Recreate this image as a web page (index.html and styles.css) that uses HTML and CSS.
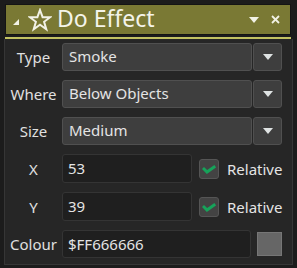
FILE: index.html
```html
<!DOCTYPE html>
<html lang="en">
<head>
  <meta charset="UTF-8" />
  <title>Do Effect</title>
  <link rel="stylesheet" href="styles.css">
</head>
<body>
  <div class="window">
    <div class="titlebar">
      <span class="corner"></span>
      <svg class="star" width="24" height="24" viewBox="0 0 24 24" fill="none" stroke="#f2f2e6" stroke-width="2" stroke-linejoin="miter">
        <polygon points="12,2 14.6,9.2 22.2,9.2 16.1,13.8 18.3,21.2 12,16.8 5.7,21.2 7.9,13.8 1.8,9.2 9.4,9.2"></polygon>
      </svg>
      <h1 class="title">Do Effect</h1>
      <span class="title-tools">
        <span class="tri"></span>
        <svg class="close" width="9" height="9" viewBox="0 0 9 9" stroke="#f2f2e6" stroke-width="1.8">
          <line x1="1" y1="1" x2="8" y2="8"></line>
          <line x1="8" y1="1" x2="1" y2="8"></line>
        </svg>
      </span>
    </div>
    <div class="accent"></div>
    <div class="body">
      <div class="row">
        <label class="label">Type</label>
        <div class="select">Smoke</div>
        <div class="drop"><span class="tri"></span></div>
      </div>
      <div class="row">
        <label class="label">Where</label>
        <div class="select">Below Objects</div>
        <div class="drop"><span class="tri"></span></div>
      </div>
      <div class="row">
        <label class="label">Size</label>
        <div class="select">Medium</div>
        <div class="drop"><span class="tri"></span></div>
      </div>
      <div class="row row-input">
        <label class="label">X</label>
        <div class="field field-short">53</div>
        <span class="check">
          <svg width="14" height="10" viewBox="0 0 14 10" fill="none" stroke="#16a35a" stroke-width="3" stroke-linecap="square">
            <polyline points="2,5 5,8 12,3"></polyline>
          </svg>
        </span>
        <span class="check-text">Relative</span>
      </div>
      <div class="row row-input">
        <label class="label">Y</label>
        <div class="field field-short">39</div>
        <span class="check">
          <svg width="14" height="10" viewBox="0 0 14 10" fill="none" stroke="#16a35a" stroke-width="3" stroke-linecap="square">
            <polyline points="2,5 5,8 12,3"></polyline>
          </svg>
        </span>
        <span class="check-text">Relative</span>
      </div>
      <div class="row row-colour">
        <label class="label">Colour</label>
        <div class="field field-colour">$FF666666</div>
        <span class="swatch"></span>
      </div>
    </div>
  </div>
</body>
</html>
```

FILE: styles.css
```css
* {
  margin: 0;
  padding: 0;
  box-sizing: border-box;
}

body {
  background: #1c1c1c;
  font-family: "Noto Sans", "Open Sans", sans-serif;
  color: #e4e4e4;
  width: 297px;
  height: 268px;
  overflow: hidden;
}

.window {
  padding: 4px 4px 0 4px;
  height: 268px;
}

.titlebar {
  height: 31px;
  margin: 0 2px 0 1px;
  background: #7a7934;
  border: 1px solid #141414;
  display: flex;
  align-items: center;
  color: #f4f4ea;
}

.corner {
  width: 0;
  height: 0;
  margin-left: 7px;
  border-left: 6px solid transparent;
  border-bottom: 6px solid #f2f2e6;
  margin-top: 5px;
}

.star {
  margin-left: 9px;
}

.title {
  font-size: 23px;
  font-weight: normal;
  margin-left: 5px;
  line-height: 1;
  margin-top: -2px;
}

.title-tools {
  margin-left: auto;
  display: flex;
  align-items: center;
  gap: 12px;
  margin-right: 10px;
}

.title-tools .tri {
  border-top-color: #f2f2e6;
}

.accent {
  height: 2px;
  margin: 2px 2px 0 1px;
  background: #c2c262;
}

.body {
  height: 226px;
  background: #262626;
  border-left: 1px solid #363636;
  border-right: 1px solid #363636;
  border-bottom: 1px solid #363636;
  padding-top: 4px;
}

.row {
  display: flex;
  align-items: center;
  height: 28px;
  margin-bottom: 9px;
}

.row-input {
  height: 29px;
}

.row-colour {
  margin-top: 1px;
}

.label {
  width: 57px;
  text-align: center;
  font-size: 15px;
  color: #e0e0e0;
}

.select,
.drop {
  height: 28px;
  background: #3e3e3e;
  border: 1px solid #505050;
  border-radius: 3px;
}

.select {
  width: 190px;
  padding-left: 6px;
  font-size: 15px;
  line-height: 25px;
}

.drop {
  width: 29px;
  margin-left: 1px;
  display: flex;
  align-items: center;
  justify-content: center;
}

.tri {
  width: 0;
  height: 0;
  border-left: 5px solid transparent;
  border-right: 5px solid transparent;
  border-top: 6px solid #dfe3e3;
}

.field {
  height: 29px;
  background: #1f1f1f;
  border: 1px solid #343434;
  border-radius: 3px;
  padding-left: 5px;
  font-size: 15px;
  line-height: 26px;
}

.field-short {
  width: 130px;
}

.check {
  width: 20px;
  height: 20px;
  margin-left: 7px;
  background: #434343;
  border: 1px solid #555;
  border-radius: 3px;
  display: flex;
  align-items: center;
  justify-content: center;
}

.check-text {
  margin-left: 8px;
  font-size: 15px;
}

.field-colour {
  width: 189px;
  height: 28px;
}

.swatch {
  width: 25px;
  height: 24px;
  margin-left: 6px;
  background: #666666;
  border: 1px solid #767676;
}
```
